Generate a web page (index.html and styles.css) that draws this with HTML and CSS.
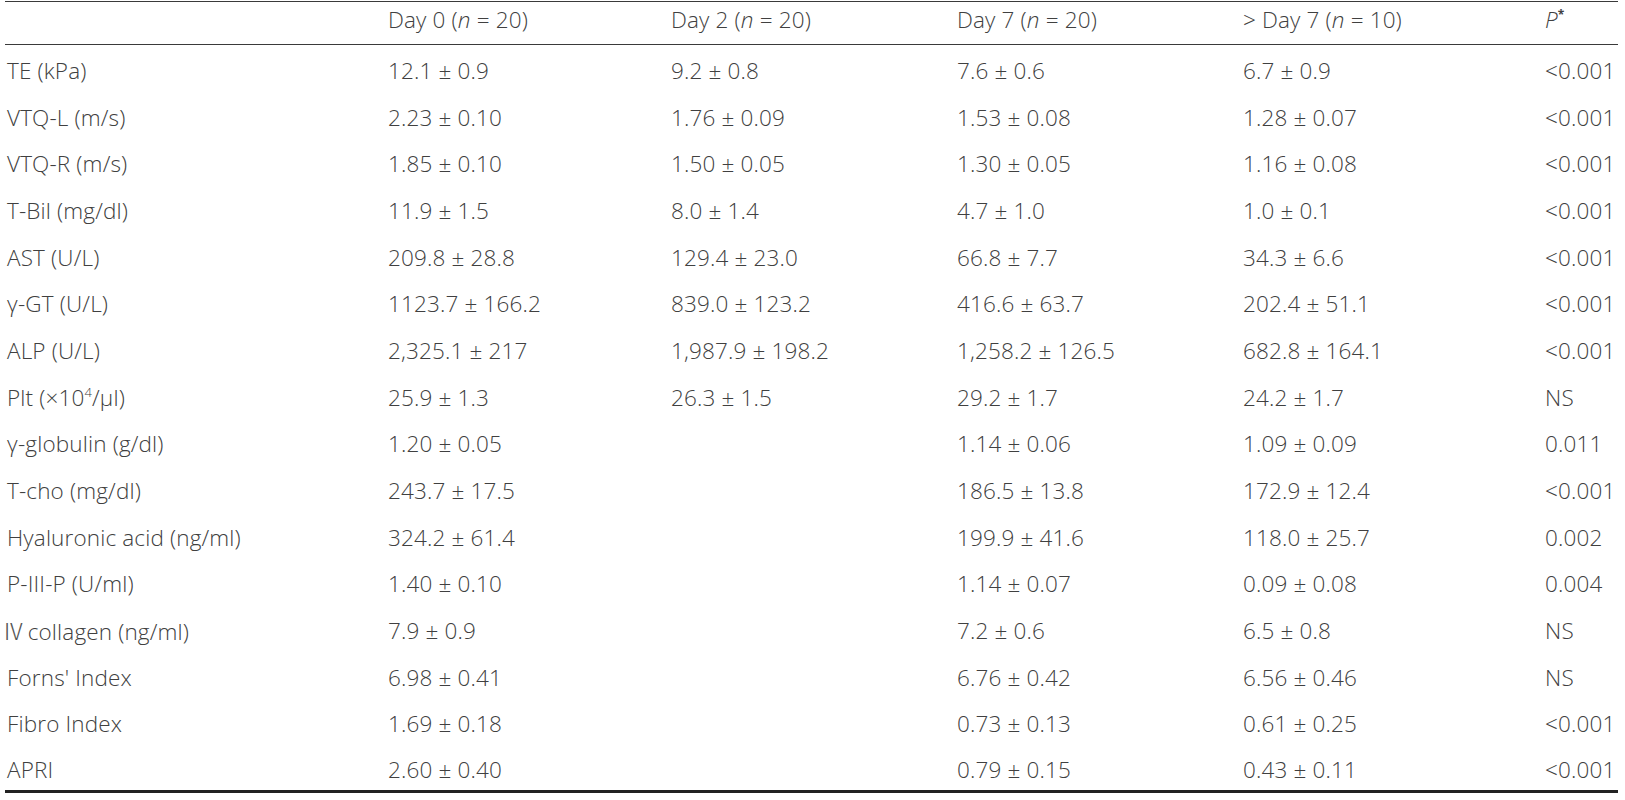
FILE: index.html
```html
<!DOCTYPE html>
<html>
<head>
<meta charset="utf-8">
<link rel="stylesheet" href="styles.css">
</head>
<body>
<table class="data">
  <colgroup>
    <col class="c1"><col class="c2"><col class="c3"><col class="c4"><col class="c5"><col class="c6">
  </colgroup>
  <thead>
    <tr>
      <th></th>
      <th>Day 0 (<i>n</i> = 20)</th>
      <th>Day 2 (<i>n</i> = 20)</th>
      <th>Day 7 (<i>n</i> = 20)</th>
      <th>&gt; Day 7 (<i>n</i> = 10)</th>
      <th><i>P</i><sup class="star">*</sup></th>
    </tr>
  </thead>
  <tbody>
    <tr><td>TE (kPa)</td><td>12.1 ± 0.9</td><td>9.2 ± 0.8</td><td>7.6 ± 0.6</td><td>6.7 ± 0.9</td><td>&lt;0.001</td></tr>
    <tr><td>VTQ-L (m/s)</td><td>2.23 ± 0.10</td><td>1.76 ± 0.09</td><td>1.53 ± 0.08</td><td>1.28 ± 0.07</td><td>&lt;0.001</td></tr>
    <tr><td>VTQ-R (m/s)</td><td>1.85 ± 0.10</td><td>1.50 ± 0.05</td><td>1.30 ± 0.05</td><td>1.16 ± 0.08</td><td>&lt;0.001</td></tr>
    <tr><td>T-Bil (mg/dl)</td><td>11.9 ± 1.5</td><td>8.0 ± 1.4</td><td>4.7 ± 1.0</td><td>1.0 ± 0.1</td><td>&lt;0.001</td></tr>
    <tr><td>AST (U/L)</td><td>209.8 ± 28.8</td><td>129.4 ± 23.0</td><td>66.8 ± 7.7</td><td>34.3 ± 6.6</td><td>&lt;0.001</td></tr>
    <tr><td>γ-GT (U/L)</td><td>1123.7 ± 166.2</td><td>839.0 ± 123.2</td><td>416.6 ± 63.7</td><td>202.4 ± 51.1</td><td>&lt;0.001</td></tr>
    <tr><td>ALP (U/L)</td><td>2,325.1 ± 217</td><td>1,987.9 ± 198.2</td><td>1,258.2 ± 126.5</td><td>682.8 ± 164.1</td><td>&lt;0.001</td></tr>
    <tr><td>Plt (×10<sup>4</sup>/μl)</td><td>25.9 ± 1.3</td><td>26.3 ± 1.5</td><td>29.2 ± 1.7</td><td>24.2 ± 1.7</td><td>NS</td></tr>
    <tr><td>γ-globulin (g/dl)</td><td>1.20 ± 0.05</td><td></td><td>1.14 ± 0.06</td><td>1.09 ± 0.09</td><td>0.011</td></tr>
    <tr><td>T-cho (mg/dl)</td><td>243.7 ± 17.5</td><td></td><td>186.5 ± 13.8</td><td>172.9 ± 12.4</td><td>&lt;0.001</td></tr>
    <tr><td>Hyaluronic acid (ng/ml)</td><td>324.2 ± 61.4</td><td></td><td>199.9 ± 41.6</td><td>118.0 ± 25.7</td><td>0.002</td></tr>
    <tr><td>P-III-P (U/ml)</td><td>1.40 ± 0.10</td><td></td><td>1.14 ± 0.07</td><td>0.09 ± 0.08</td><td>0.004</td></tr>
    <tr><td><span class="rn">Ⅳ</span> collagen (ng/ml)</td><td>7.9 ± 0.9</td><td></td><td>7.2 ± 0.6</td><td>6.5 ± 0.8</td><td>NS</td></tr>
    <tr><td>Forns' Index</td><td>6.98 ± 0.41</td><td></td><td>6.76 ± 0.42</td><td>6.56 ± 0.46</td><td>NS</td></tr>
    <tr><td>Fibro Index</td><td>1.69 ± 0.18</td><td></td><td>0.73 ± 0.13</td><td>0.61 ± 0.25</td><td>&lt;0.001</td></tr>
    <tr><td>APRI</td><td>2.60 ± 0.40</td><td></td><td>0.79 ± 0.15</td><td>0.43 ± 0.11</td><td>&lt;0.001</td></tr>
  </tbody>
</table>
</body>
</html>
```
FILE: styles.css
```css
html, body {
  margin: 0;
  padding: 0;
  background: #ffffff;
}
body {
  padding: 1px 0 0 5px;
  font-family: "Open Sans", "Noto Sans", "Liberation Sans", sans-serif;
  font-weight: 300;
  color: #404040;
}
.data {
  width: 1613px;
  border-collapse: collapse;
  table-layout: fixed;
  font-size: 22.5px;
  line-height: 1.2;
  letter-spacing: 0.15px;
  border-top: 1px solid #3a3a3a;
  border-bottom: 3px solid #222222;
}
.c1 { width: 381px; }
.c2 { width: 283px; }
.c3 { width: 286px; }
.c4 { width: 286px; }
.c5 { width: 302px; }
.c6 { width: 75px; }
.data th {
  font-weight: 300;
  text-align: left;
  height: 43px;
  box-sizing: border-box;
  padding: 0 0 7px 2px;
  vertical-align: middle;
  border-bottom: 1px solid #3a3a3a;
  white-space: nowrap;
}
.data td {
  height: 46.7px;
  padding: 5px 0 0 2px;
  box-sizing: border-box;
  vertical-align: middle;
  white-space: nowrap;
}
.data i {
  font-style: italic;
}
.data sup {
  font-size: 13px;
  line-height: 0;
  vertical-align: 9px;
}
.data .star {
  font-weight: 700;
  font-size: 12px;
}
.rn {
  font-family: "Noto Sans CJK JP", "DejaVu Sans", sans-serif;
  font-weight: 300;
  color: #555555;
  margin-left: -5px;
  margin-right: -3px;
}
```
